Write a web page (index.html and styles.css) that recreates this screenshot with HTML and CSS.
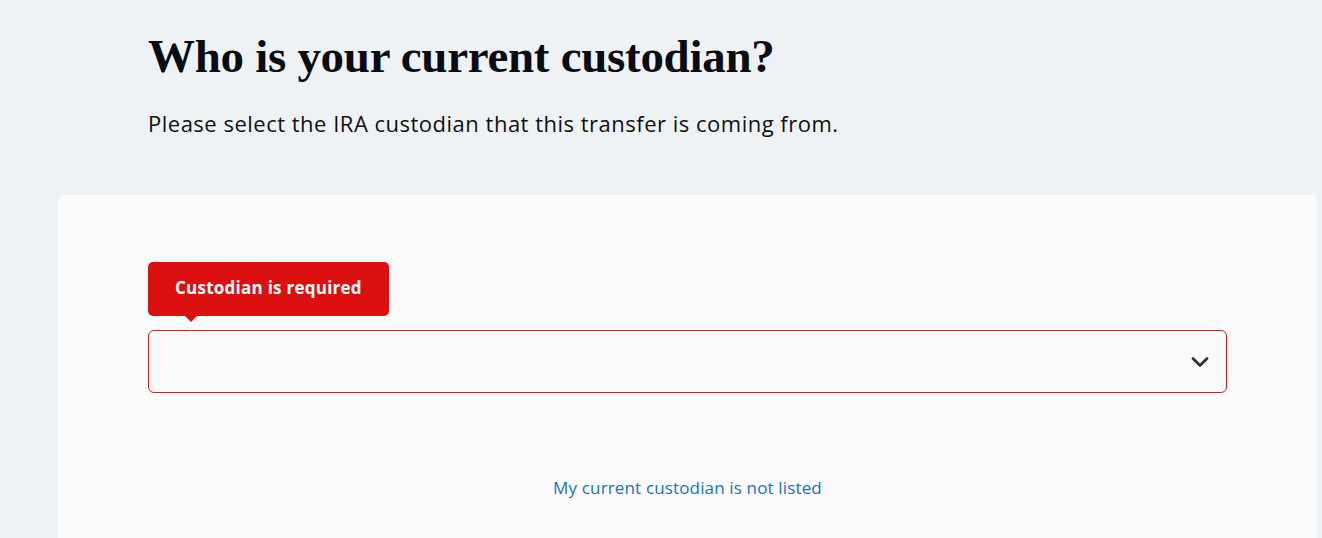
FILE: index.html
```html
<!DOCTYPE html>
<html lang="en">

<head>
    <meta charset="UTF-8">
    <meta name="viewport" content="width=device-width, initial-scale=1.0">
    <title>Custodian</title>
    <link rel="stylesheet" href="styles.css">
</head>

<body>
    <div class="intro">
        <h1>Who is your current custodian?</h1>
        <p class="lead">Please select the IRA custodian that this transfer is coming from.</p>
    </div>

    <div class="card">
        <div class="field">
            <div class="error-tip">Custodian is required</div>
            <div class="select-box">
                <svg class="chevron" width="20" height="12" viewBox="0 0 20 12">
                    <path d="M3 2.5 L10 9.5 L17 2.5" fill="none" stroke="#333" stroke-width="2.8" stroke-linecap="round" stroke-linejoin="round" />
                </svg>
            </div>
        </div>
        <a class="not-listed" href="#">My current custodian is not listed</a>
    </div>
</body>

</html>
```

FILE: styles.css
```css
body {
    margin: 0;
    background: #eef2f5;
    font-family: "Open Sans", "Noto Sans", sans-serif;
    color: #111;
}

.intro {
    padding: 28px 0 0 148px;
    height: 195px;
    box-sizing: border-box;
}

h1 {
    margin: 0;
    font-family: "Liberation Serif", serif;
    font-weight: bold;
    font-size: 47px;
    line-height: 56px;
    color: #0b0b14;
    letter-spacing: -0.3px;
}

.lead {
    margin: 24px 0 0;
    font-size: 22px;
    line-height: 30px;
    letter-spacing: 0.5px;
}

.card {
    margin: 0 5px 0 58px;
    background: #fafafa;
    border-radius: 6px 6px 0 0;
    padding: 67px 90px 40px;
    height: 343px;
    box-sizing: border-box;
}

.field {
    display: flex;
    flex-direction: column;
    align-items: flex-start;
}

.error-tip {
    position: relative;
    background: #dc1010;
    color: #fff;
    font-weight: bold;
    font-size: 17px;
    letter-spacing: 0.25px;
    height: 54px;
    line-height: 52px;
    padding: 0 27px;
    border-radius: 5px;
    box-sizing: border-box;
    margin-bottom: 14px;
}

.error-tip::after {
    content: "";
    position: absolute;
    left: 37px;
    bottom: -6px;
    border-left: 6px solid transparent;
    border-right: 6px solid transparent;
    border-top: 6px solid #dc1010;
}

.select-box {
    align-self: stretch;
    height: 63px;
    border: 1px solid #e01818;
    border-radius: 6px;
    box-sizing: border-box;
    display: flex;
    align-items: center;
    justify-content: flex-end;
    padding-right: 16px;
}

.not-listed {
    display: block;
    text-align: center;
    margin-top: 83px;
    color: #1d6fc6;
    font-size: 17px;
    letter-spacing: 0.15px;
    text-decoration: none;
}
```
